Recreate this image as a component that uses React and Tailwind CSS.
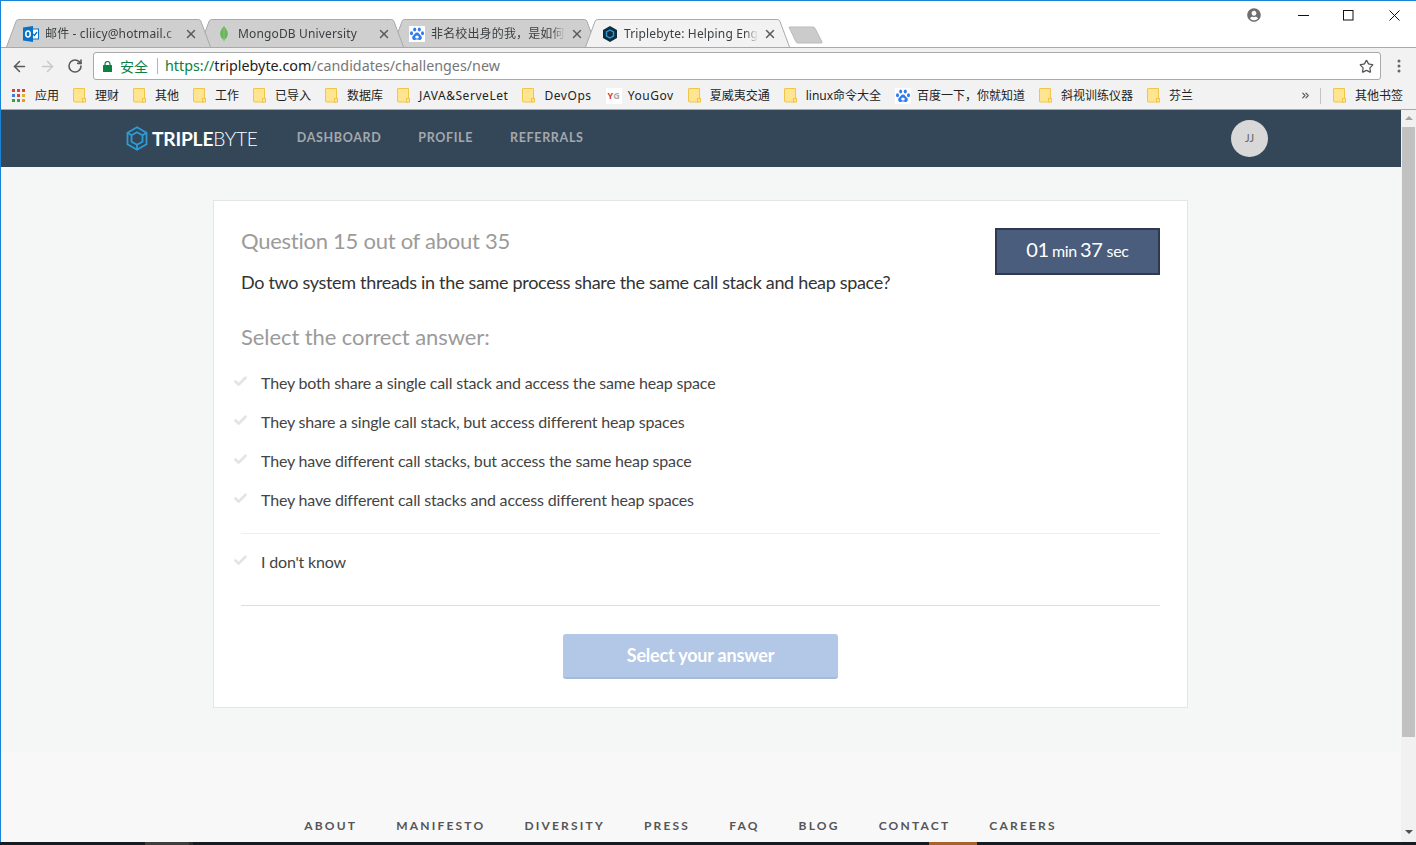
import React from 'react';
import { ArrowLeft, ArrowRight, Check, RotateCw, Star, X, ChevronsRight } from 'lucide-react';
import { FaUserCircle } from 'react-icons/fa';

const chromeFont = "font-['Noto_Sans','Noto_Sans_CJK_SC',sans-serif]";

const bookmarks = [
  { label: '理财' },
  { label: '其他' },
  { label: '工作' },
  { label: '已导入' },
  { label: '数据库' },
  { label: 'JAVA&ServeLet', latin: true },
  { label: 'DevOps', latin: true },
  { label: 'YouGov', icon: 'yg', latin: true },
  { label: '夏威夷交通' },
  { label: 'linux命令大全' },
  { label: '百度一下，你就知道', icon: 'baidu' },
  { label: '斜视训练仪器' },
  { label: '芬兰' },
];

const answers = [
  'They both share a single call stack and access the same heap space',
  'They share a single call stack, but access different heap spaces',
  'They have different call stacks, but access the same heap space',
  'They have different call stacks and access different heap spaces',
];

const footerLinks = ['ABOUT', 'MANIFESTO', 'DIVERSITY', 'PRESS', 'FAQ', 'BLOG', 'CONTACT', 'CAREERS'];

const FolderIcon = () => (
  <svg width="16" height="15" viewBox="0 0 16 15" className="shrink-0">
    <path d="M1 .5h10.500v12.500a1 1 0 0 1-1 1H1.500a1 1 0 0 1-1-1V1a.5.5 0 0 1 .5-.5z" fill="#ffe591" stroke="#f0c649" />
    <rect x="9.500" y="10.500" width="3" height="3.500" fill="#ffe591" stroke="#f0c649" />
  </svg>
);

const BaiduIcon = () => (
  <svg width="16" height="16" viewBox="0 0 16 16" className="shrink-0">
    <rect width="16" height="16" fill="#fff" />
    <ellipse cx="5.700" cy="3.500" rx="1.500" ry="2" fill="#2f7cf0" />
    <ellipse cx="10.300" cy="3.500" rx="1.500" ry="2" fill="#2f7cf0" />
    <ellipse cx="2.500" cy="7.200" rx="1.500" ry="2" fill="#2f7cf0" />
    <ellipse cx="13.500" cy="7.200" rx="1.500" ry="2" fill="#2f7cf0" />
    <path d="M8 6.500c-2 0-2.500 2-4 3.200-1.500 1.300-.8 4.800 1.800 4.300 1-.2 1.400-.4 2.200-.4s1.200.2 2.200.4c2.600.5 3.300-3 1.800-4.300-1.500-1.200-2-3.200-4-3.200z" fill="#2f7cf0" />
    <ellipse cx="8" cy="11" rx="1.800" ry="1.600" fill="#fff" />
  </svg>
);

const OutlookIcon = () => (
  <svg width="16" height="16" viewBox="0 0 16 16" className="shrink-0">
    <rect x="7" y="3" width="8.500" height="10" fill="#fff" stroke="#0a72c6" />
    <path d="M10 8l1.500 1.500 2.500-3.500" fill="none" stroke="#0a72c6" strokeWidth="1.300" />
    <path d="M0 1.500L10 0v16L0 14.500z" fill="#0a72c6" />
    <ellipse cx="5" cy="8" rx="2.200" ry="3" fill="none" stroke="#fff" strokeWidth="1.500" />
  </svg>
);

const MongoIcon = () => (
  <svg width="16" height="16" viewBox="0 0 16 16" className="shrink-0">
    <path d="M8 0c1 2 3.800 4 3.800 7.800 0 3.600-2.600 5.400-3.300 6L8 16l-.5-2.200c-.7-.6-3.300-2.400-3.300-6C4.200 4 7 2 8 0z" fill="#67b45a" />
    <path d="M8 2v13" stroke="#a6d199" strokeWidth=".6" />
  </svg>
);

const TriplebyteFavicon = () => (
  <svg width="16" height="16" viewBox="0 0 16 16" className="shrink-0">
    <path d="M8 0l7 4v8l-7 4-7-4V4z" fill="#0f2c40" />
    <path d="M8 4l3.500 2v4L8 12l-3.500-2V6z" fill="none" stroke="#2d9cd5" strokeWidth="1.400" />
  </svg>
);

const AppsIcon = () => {
  const colors = ['#d8433a', '#d8433a', '#d8433a', '#3f7ce0', '#d8433a', '#e0b32d', '#3f9b4f', '#3f9b4f', '#e79a26'];
  return (
    <div className="grid grid-cols-3 gap-[2px] w-[13px] h-[13px] shrink-0">
      {colors.map((c, i) => (
        <svg key={i} width="3" height="3" viewBox="0 0 3 3"><rect width="3" height="3" fill={c} /></svg>
      ))}
    </div>
  );
};

const Tab = ({ icon, title, active, z }) => (
  <div className={`relative w-[205px] h-[28px] -mr-[12px] shrink-0 ${z}`}>
    <svg width="205" height="28" viewBox="0 0 205 28" className="absolute inset-0">
      <path
        d="M0.500 28L10 2.500Q10.800 .5 12.500 .5H192.500Q194.200 .5 195 2.500L204.500 28"
        fill={active ? '#f2f2f2' : '#cfcfcf'}
        stroke="#a9a9a9"
      />
    </svg>
    <div className="relative flex items-center h-full pl-[17px] pt-[1px]">
      {icon}
      <span className="ml-[6px] w-[134px] whitespace-nowrap overflow-hidden text-[12px] text-[#3c4043] tracking-[0.15px] [mask-image:linear-gradient(to_right,black_90%,transparent)]">
        {title}
      </span>
      <X className="ml-[5px] w-[14px] h-[14px] text-[#5a5a5a]" strokeWidth={2.500} />
    </div>
  </div>
);

const Answer = ({ text }) => (
  <div className="flex items-center h-[39px] -ml-[8px]">
    <Check className="w-[15px] h-[15px] text-[#e4e4e4] -mt-[2px]" strokeWidth={4.500} />
    <span className="ml-[13px] text-[16px] text-[#444] tracking-[-0.18px]">{text}</span>
  </div>
);

const App = () => {
  return (
    <div className="w-[1416px] h-[845px] overflow-hidden flex flex-col bg-white font-['Lato',sans-serif] [font-variant-ligatures:none]">
      <div className="flex flex-col flex-1 min-h-0 border-t border-l border-[#1883d7]">
        {/* Browser chrome */}
        <div className={chromeFont}>
          <div className="relative flex items-end h-[47px] pl-[5px] border-b border-[#a9a9a9]">
            <Tab icon={<OutlookIcon />} title="邮件 - cliicy@hotmail.c" z="z-[3]" />
            <Tab icon={<MongoIcon />} title="MongoDB University" z="z-[2]" />
            <Tab icon={<BaiduIcon />} title="非名校出身的我，是如何" z="z-[1]" />
            <Tab icon={<TriplebyteFavicon />} title="Triplebyte: Helping Eng" active z="z-[4]" />
            <svg width="36" height="18" viewBox="0 0 36 18" className="ml-[10px] mb-[3px]">
              <path d="M1 1h24q1.500 0 2.200 1.500L34 16q.5 1-1 1H10q-1.500 0-2.200-1.500z" fill="#cbcbcb" stroke="#bbb" />
            </svg>
            <div className="ml-auto flex items-center h-[28px] self-start text-[#222]">
              <FaUserCircle className="w-[14px] h-[14px] text-[#6f6f6f] mr-[37px]" />
              <svg width="11" height="11" viewBox="0 0 11 11" fill="none" stroke="#111" className="mr-[34px]"><path d="M0 5.500h11" /></svg>
              <svg width="11" height="11" viewBox="0 0 11 11" fill="none" stroke="#111" className="mr-[35px]"><rect x=".5" y=".5" width="9.500" height="9.500" /></svg>
              <svg width="11" height="11" viewBox="0 0 11 11" fill="none" stroke="#111" className="mr-[16px]"><path d="M.5.5l10 10M10.500.5l-10 10" /></svg>
            </div>
          </div>

          <div className="flex items-center h-[36px] bg-[#f2f2f2]">
            <ArrowLeft className="ml-[10px] w-[17px] h-[17px] text-[#5a5a5a]" strokeWidth={2.200} />
            <ArrowRight className="ml-[11px] w-[17px] h-[17px] text-[#c9c9c9]" strokeWidth={2.200} />
            <RotateCw className="ml-[11px] w-[16px] h-[16px] text-[#5a5a5a]" strokeWidth={2.400} />
            <div className="flex items-center ml-[10px] w-[1288px] h-[28px] bg-white border border-[#a9a9a9] rounded-[3px]">
              <svg width="9" height="11" viewBox="0 0 9 11" className="ml-[9px]">
                <path d="M2 4.500V3a2.500 2.500 0 0 1 5 0v1.500" fill="none" stroke="#0b8043" strokeWidth="1.200" />
                <rect y="4" width="9" height="7" rx=".5" fill="#0b8043" />
              </svg>
              <span className="ml-[8px] text-[14px] text-[#0b8043]">安全</span>
              <div className="ml-[9px] w-px h-[16px] bg-[#b5b5b5]" />
              <span className="ml-[7px] text-[14.300px] whitespace-nowrap">
                <span className="text-[#0b8043]">https://</span>
                <span className="text-[#222]">triplebyte.com</span>
                <span className="text-[#777]">/candidates/challenges/new</span>
              </span>
              <Star className="ml-auto mr-[6px] w-[15px] h-[15px] text-[#555]" strokeWidth={2} />
            </div>
            <svg width="4" height="14" viewBox="0 0 4 14" className="ml-[16px]">
              <circle cx="2" cy="2" r="1.500" fill="#666" />
              <circle cx="2" cy="7" r="1.500" fill="#666" />
              <circle cx="2" cy="12" r="1.500" fill="#666" />
            </svg>
          </div>

          <div className="flex items-center h-[26px] pl-[11px] pb-[2px] bg-[#f2f2f2] border-b border-[#a9a9a9] text-[12px] text-[#222] whitespace-nowrap">
            <AppsIcon />
            <span className="ml-[10px] mr-[14px]">应用</span>
            {bookmarks.map((b) => (
              <div key={b.label} className="flex items-center mr-[14px]">
                {b.icon === 'yg' ? (
                  <span className="flex items-center justify-center w-[16px] h-[16px] bg-white text-[9px] font-bold text-[#d33] leading-none">
                    Y<span className="text-[#aaa]">G</span>
                  </span>
                ) : b.icon === 'baidu' ? (
                  <BaiduIcon />
                ) : (
                  <FolderIcon />
                )}
                <span className={b.latin ? 'ml-[6px] tracking-[0.55px]' : 'ml-[6px]'}>{b.label}</span>
              </div>
            ))}
            <ChevronsRight className="ml-auto w-[11px] h-[11px] text-[#555]" strokeWidth={2.500} />
            <div className="ml-[9px] w-px h-[16px] bg-[#c4c4c4]" />
            <div className="flex items-center ml-[12px] mr-[13px]">
              <FolderIcon />
              <span className="ml-[6px]">其他书签</span>
            </div>
          </div>
        </div>

        {/* Page + scrollbar */}
        <div className="flex flex-1 min-h-0">
          <div className="flex flex-col flex-1 min-w-0 bg-[#f5f7f7]">
            <nav className="flex items-center h-[57px] shrink-0 pl-[125px] pr-[133px] bg-[#344759]">
              <svg width="22" height="25" viewBox="0 0 22 25" fill="none" stroke="#2d9cd5" strokeWidth="1.800" className="shrink-0">
                <path d="M11 1.200l9.500 5.500v11.600L11 23.800 1.500 18.300V6.700z" />
                <path d="M5.500 9.300L11 6.200l5.500 3.100v6.400L11 18.800l-5.500-3.100z" />
                <path d="M1.500 6.700l4 2.600M20.500 6.700l-4 2.600M11 23.800v-5" />
              </svg>
              <span className="ml-[4px] text-[19.200px] text-white tracking-[-0.2px] leading-none">
                <span className="font-bold">TRIPLE</span>
                <span className="font-light">BYTE</span>
              </span>
              <div className="flex ml-[39px] gap-[37px] -mt-[1px] text-[12.500px] font-bold tracking-[0.650px] text-[#a5a8ab]">
                <span>DASHBOARD</span>
                <span>PROFILE</span>
                <span>REFERRALS</span>
              </div>
              <div className="flex items-center justify-center ml-auto w-[37px] h-[37px] rounded-full bg-[#d8d8d8] text-[11px] text-[#666]">
                JJ
              </div>
            </nav>

            <main className="pt-[33px] pl-[212px]">
              <div className="w-[975px] h-[508px] px-[27px] pt-[27px] bg-white border border-[#e3e6e6]">
                <div className="flex justify-between">
                  <div>
                    <h2 className="mt-[-1px] text-[22px] leading-[28px] text-[#9b9b9b] tracking-[-0.26px]">Question 15 out of about 35</h2>
                    <p className="mt-[14px] text-[18px] leading-[26px] text-[#333] tracking-[-0.32px]">
                      Do two system threads in the same process share the same call stack and heap space?
                    </p>
                  </div>
                  <div className="flex items-baseline justify-center w-[165px] h-[47px] pt-[4px] bg-[#4a5d7c] border-2 border-[#2e3a50] text-white text-[16px] tracking-[-0.3px]">
                    <span className="text-[20px]">01</span>
                    <span className="ml-[3px]">min</span>
                    <span className="ml-[3px] text-[20px]">37</span>
                    <span className="ml-[4px]">sec</span>
                  </div>
                </div>
                <h3 className="mt-[28px] text-[22px] leading-[28px] text-[#9b9b9b] tracking-[-0.08px]">Select the correct answer:</h3>
                <div className="mt-[12px]">
                  {answers.map((a) => (
                    <Answer key={a} text={a} />
                  ))}
                </div>
                <div className="mt-[14px] border-t border-[#eeeeee] pt-[8px]">
                  <Answer text="I don't know" />
                </div>
                <div className="mt-[24px] border-t border-[#dddddd] pt-[28px] flex justify-center">
                  <button className="w-[275px] h-[45px] rounded-[3px] bg-[#b3c8e6] border-b-2 border-[#a5bbdb] text-white text-[18px] font-bold tracking-[-0.2px]">
                    Select your answer
                  </button>
                </div>
              </div>
            </main>

            <footer className="mt-auto flex justify-center items-end h-[90px] gap-[39px] pr-[41px] pb-[7px] bg-[#f8f8f8] text-[12px] font-bold tracking-[2.200px] text-[#555]">
              {footerLinks.map((l) => (
                <span key={l}>{l}</span>
              ))}
            </footer>
          </div>

          <div className="flex flex-col items-center w-[15px] shrink-0 bg-[#f1f1f1]">
            <div className="mt-[6px] w-0 h-0 border-x-[4px] border-x-transparent border-b-[4px] border-b-[#a3a3a3]" />
            <div className="mt-[7px] w-[13px] h-[610px] bg-[#c1c1c1]" />
            <div className="mt-[93px] w-0 h-0 border-x-[4px] border-x-transparent border-t-[4px] border-t-[#505050]" />
          </div>
        </div>
      </div>

      {/* Taskbar edge */}
      <div className="flex h-[3px] shrink-0 bg-[#141d24]">
        <div className="ml-[145px] w-[44px] bg-[#3e3e3e]" />
        <div className="w-[4px] bg-[#2c2c2c]" />
        <div className="ml-[736px] w-[48px] bg-[#a8622a]" />
      </div>
    </div>
  );
};

export default App;
